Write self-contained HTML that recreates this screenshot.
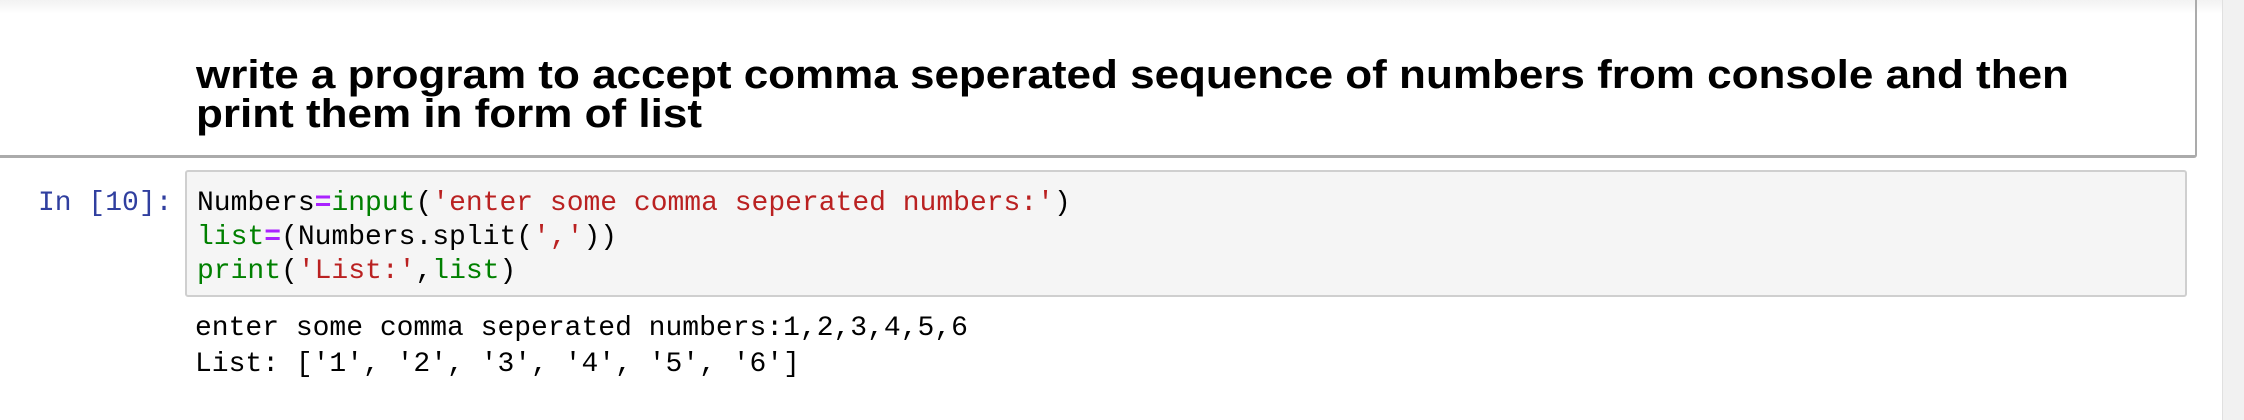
<!DOCTYPE html>
<html><head><meta charset="utf-8"><style>
body{margin:0;width:2244px;height:420px;background:#fff;position:relative;overflow:hidden;font-family:"Liberation Sans",sans-serif}
.top{position:absolute;left:0;top:0;width:2222px;height:14px;background:linear-gradient(#f2f2f2,#fff)}
.md{position:absolute;left:-5px;top:0;width:2200px;height:155px;border-right:2px solid #ababab;border-bottom:3px solid #ababab;border-radius:0 0 3px 0}
h1{position:absolute;left:196px;top:56px;margin:0;font-size:40px;line-height:39px;font-weight:bold;color:#000;white-space:nowrap;transform:scaleX(1.1);transform-origin:0 0}
.mono{font-family:"Liberation Mono",monospace;font-size:28px;line-height:34px;white-space:pre}
.prompt{position:absolute;left:38px;top:187px;color:#303F9F}
.code{position:absolute;left:185px;top:170px;width:2002px;height:127px;background:#f5f5f5;border:2px solid #cfcfcf;border-radius:3px;box-sizing:border-box}
.code .mono{position:absolute;left:10px;top:15px;color:#000}
.k{color:#008000}.s{color:#BA2121}.o{color:#AA22FF;font-weight:bold}
.out{position:absolute;left:195px;top:311px;color:#000;line-height:36px}
.sb{position:absolute;left:2222px;top:0;width:22px;height:420px;background:#f1f1f1;border-left:1px solid #e0e0e0}
</style></head><body>
<div class="top"></div>
<div class="md"></div>
<h1>write a program to accept comma seperated sequence of numbers from console and then<br>print them in form of list</h1>
<div class="prompt mono">In [10]:</div>
<div class="code"><div class="mono">Numbers<span class="o">=</span><span class="k">input</span>(<span class="s">'enter some comma seperated numbers:'</span>)
<span class="k">list</span><span class="o">=</span>(Numbers.split(<span class="s">','</span>))
<span class="k">print</span>(<span class="s">'List:'</span>,<span class="k">list</span>)</div></div>
<div class="out mono">enter some comma seperated numbers:1,2,3,4,5,6
List: ['1', '2', '3', '4', '5', '6']</div>
<div class="sb"></div>
</body></html>
